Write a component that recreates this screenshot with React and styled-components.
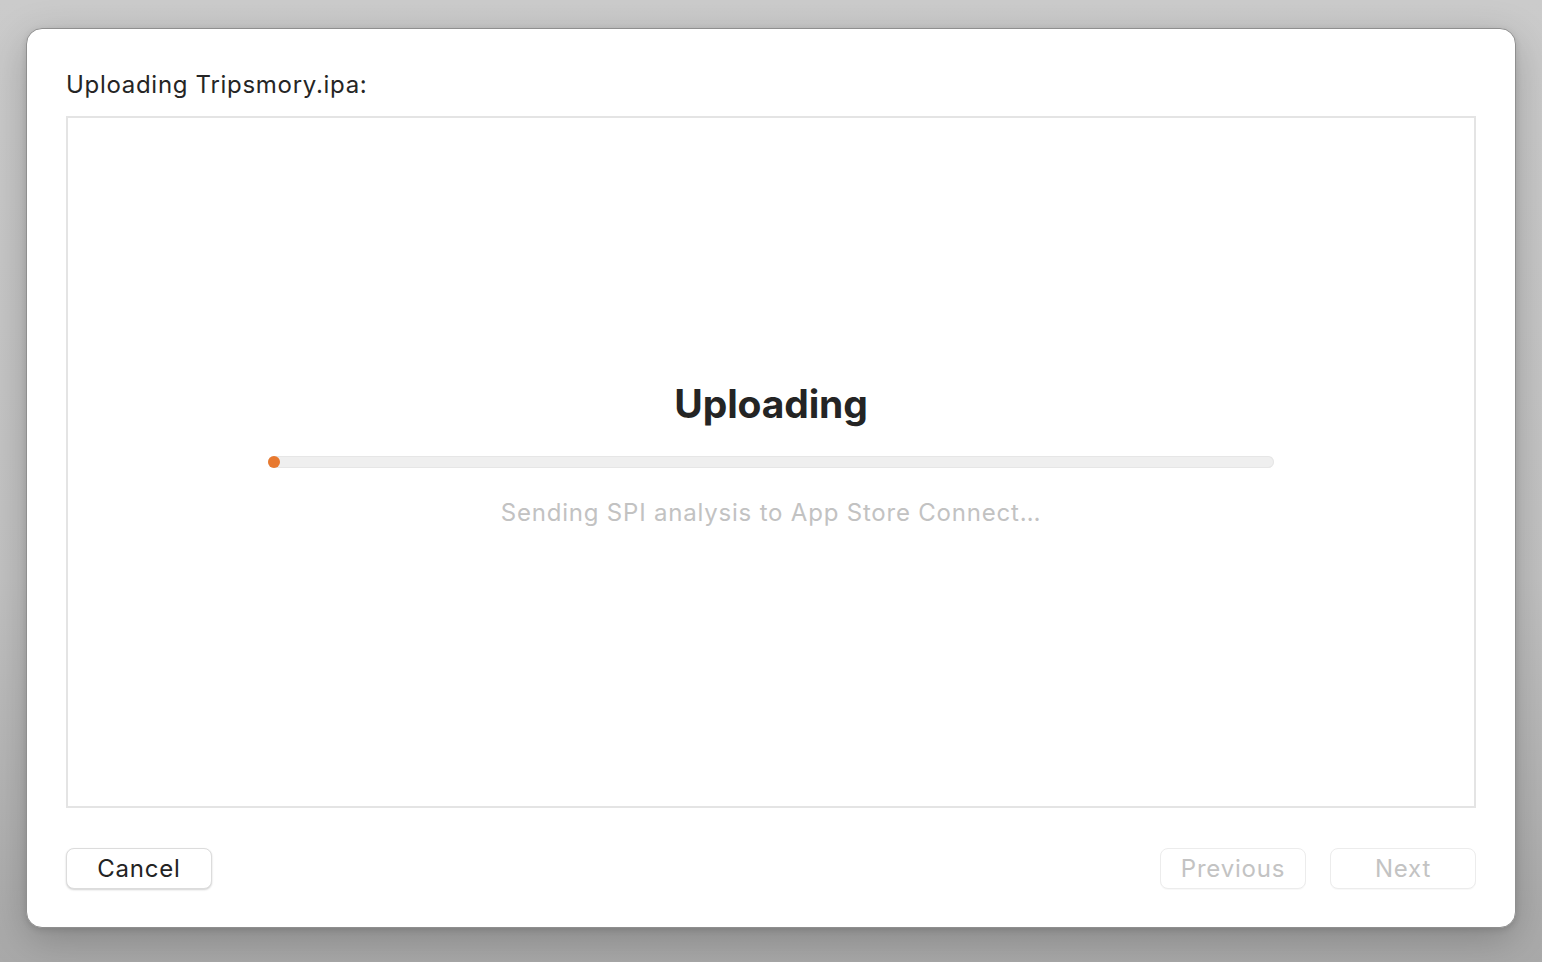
import styled, { createGlobalStyle } from "styled-components";

const GlobalStyle = createGlobalStyle`
  html, body {
    margin: 0;
    padding: 0;
  }
  body {
    width: 1542px;
    height: 962px;
    overflow: hidden;
    background: linear-gradient(180deg, #cbcbcb 0%, #c2c2c2 60%, #a9a9a9 100%);
    font-family: Inter, "Noto Sans", "Liberation Sans", sans-serif;
  }
`;

const Stage = styled.div`
  padding: 28px 26px 0 26px;
`;

const Sheet = styled.div`
  box-sizing: border-box;
  width: 1490px;
  height: 900px;
  background: #ffffff;
  border-radius: 16px;
  border: 1px solid #8f8f8f;
  box-shadow: 0 12px 40px rgba(0, 0, 0, 0.22), 0 2px 6px rgba(0, 0, 0, 0.12);
  padding: 0 39px;
  display: flex;
  flex-direction: column;
`;

const Heading = styled.div`
  font-size: 24px;
  line-height: 30px;
  color: #252525;
  padding-top: 41px;
  height: 87px;
  box-sizing: border-box;
  letter-spacing: 0.7px;
`;

const ContentBox = styled.div`
  box-sizing: border-box;
  height: 692px;
  border: 2px solid #e4e4e4;
  display: flex;
  flex-direction: column;
  align-items: center;
  padding-top: 262px;
`;

const StatusTitle = styled.div`
  font-size: 39px;
  font-weight: 700;
  line-height: 48px;
  color: #242424;
  letter-spacing: -0.15px;
`;

const Track = styled.div`
  position: relative;
  margin-top: 28px;
  width: 1006px;
  height: 12px;
  border-radius: 6px;
  background: #efefef;
  box-shadow: inset 0 0 0 1px #e6e6e6;
`;

const Fill = styled.div`
  position: absolute;
  left: 0;
  top: 0;
  height: 12px;
  border-radius: 6px;
  background: #e8792f;
`;

const StatusText = styled.div`
  margin-top: 30px;
  font-size: 24px;
  line-height: 30px;
  color: #c2c2c2;
  letter-spacing: 0.8px;
`;

const Footer = styled.div`
  display: flex;
  align-items: center;
  padding-top: 40px;
  gap: 24px;
`;

const Spacer = styled.div`
  flex: 1;
`;

const Button = styled.button`
  box-sizing: border-box;
  width: 146px;
  height: 41px;
  border-radius: 8px;
  background: #ffffff;
  font-family: Inter, "Noto Sans", "Liberation Sans", sans-serif;
  font-size: 24px;
  line-height: 30px;
  padding: 0;
  color: ${(p) => (p.disabled ? "#c3c3c3" : "#232323")};
  border: 1px solid ${(p) => (p.disabled ? "#ececec" : "#dcdcdc")};
  box-shadow: ${(p) =>
    p.disabled ? "0 1px 1px rgba(0,0,0,0.03)" : "0 1px 2px rgba(0,0,0,0.18)"};
  letter-spacing: 0.8px;
`;

export default function App() {
  const progress = 0.012;
  return (
    <>
      <GlobalStyle />
      <Stage>
        <Sheet>
          <Heading>Uploading Tripsmory.ipa:</Heading>
          <ContentBox>
            <StatusTitle>Uploading</StatusTitle>
            <Track>
              <Fill style={{ width: `${Math.max(12, progress * 1006)}px` }} />
            </Track>
            <StatusText>Sending SPI analysis to App Store Connect…</StatusText>
          </ContentBox>
          <Footer>
            <Button>Cancel</Button>
            <Spacer />
            <Button disabled>Previous</Button>
            <Button disabled>Next</Button>
          </Footer>
        </Sheet>
      </Stage>
    </>
  );
}
